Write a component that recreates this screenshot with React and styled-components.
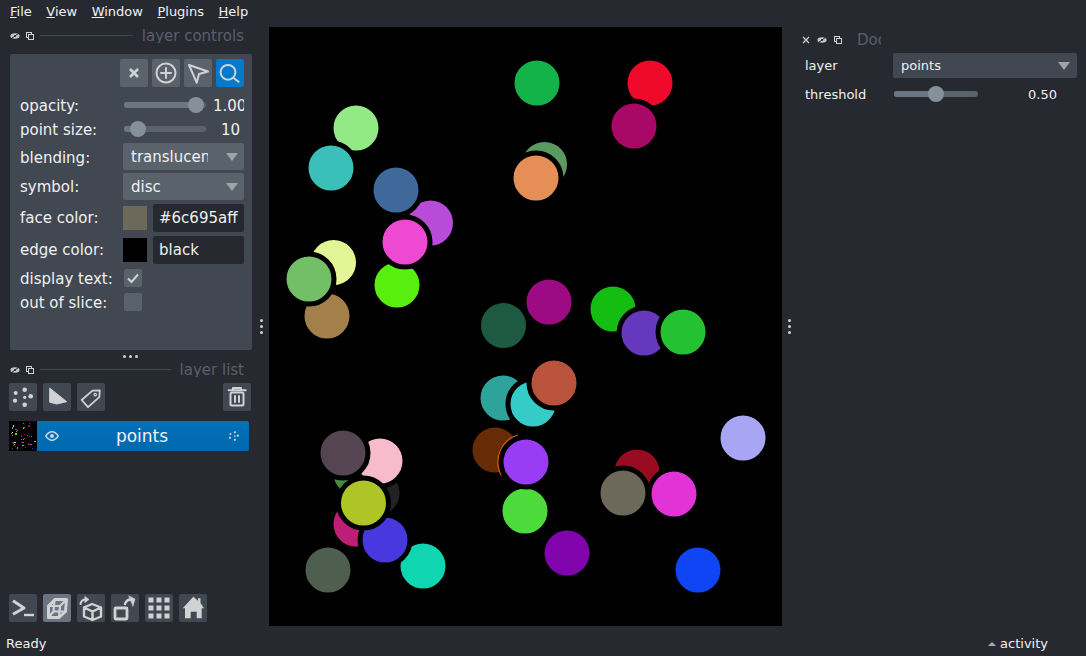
import React from "react";
import styled, { createGlobalStyle } from "styled-components";

const GlobalStyle = createGlobalStyle`
  html, body {
    margin: 0;
    padding: 0;
    background: #262930;
  }
  body {
    font-family: "DejaVu Sans", sans-serif;
    color: #f0f1f2;
  }
`;

const Page = styled.div`
  width: 1086px;
  height: 656px;
  display: flex;
  flex-direction: column;
  background: #262930;
  overflow: hidden;
`;

const MenuBar = styled.div`
  height: 27px;
  flex: none;
  display: flex;
  align-items: flex-start;
  gap: 14.5px;
  padding: 4px 0 0 10px;
  box-sizing: border-box;
  font-size: 13px;
  line-height: 16px;
`;

const Middle = styled.div`
  height: 599px;
  flex: none;
  display: flex;
`;

const LeftDock = styled.div`
  width: 253px;
  flex: none;
  display: flex;
  flex-direction: column;
`;

const TitleBar = styled.div`
  height: 17px;
  flex: none;
  display: flex;
  align-items: center;
  padding: 0 9px 0 10px;
`;

const TinyIcons = styled.div`
  display: flex;
  align-items: center;
  gap: ${(p) => p.$gap || 6}px;
  margin-right: ${(p) => p.$after || 6}px;
`;

const Rule = styled.div`
  flex: 1;
  height: 1px;
  background: #414851;
  margin-right: 9px;
`;

const TitleText = styled.div`
  font-size: 15px;
  line-height: 15px;
  height: 14px;
  overflow: hidden;
  color: #5a5f69;
  white-space: nowrap;
  ${(p) => p.$width && `width: ${p.$width}px;`}
`;

const ControlsPanel = styled.div`
  width: 242px;
  height: 296px;
  margin: 10px 0 0 10px;
  padding: 5px 8px 0 10px;
  box-sizing: border-box;
  background: #414851;
  border-radius: 2px;
  flex: none;
`;

const ModeRow = styled.div`
  display: flex;
  justify-content: flex-end;
  gap: 4px;
  margin-bottom: 6px;
`;

const IconButton = styled.div`
  width: 28px;
  height: 28px;
  flex: none;
  border-radius: 2px;
  background: ${(p) => (p.$active ? "#007acc" : p.$lit ? "#6a7380" : p.$dark ? "#414851" : "#5a626c")};
  svg { display: block; }
`;

const Row = styled.div`
  display: grid;
  grid-template-columns: 103px 121px;
  align-items: center;
  height: ${(p) => p.$h || 24}px;
  margin-top: ${(p) => p.$mt || 0}px;
  font-size: 15px;
`;

const Label = styled.span`
  padding-top: ${(p) => (p.$flat ? 0 : 2)}px;
`;

const Control = styled.div`
  display: flex;
  align-items: center;
  min-width: 0;
`;

const Track = styled.div`
  position: relative;
  width: ${(p) => p.$w}px;
  height: 6px;
  flex: none;
  margin-left: 1px;
  border-radius: 3px;
  background: #5a626c;
`;

const TrackFill = styled.div`
  height: 100%;
  border-radius: 3px;
  background: #6a7682;
`;

const Knob = styled.div`
  position: absolute;
  top: -5px;
  width: 16px;
  height: 16px;
  margin-left: -8px;
  border-radius: 50%;
  background: #86909b;
`;

const SliderValue = styled.div`
  flex: 1;
  min-width: 0;
  overflow: hidden;
  white-space: nowrap;
  text-align: ${(p) => (p.$clip ? "left" : "right")};
  padding-top: 2px;
  padding-left: ${(p) => (p.$clip ? 7 : 0)}px;
  padding-right: ${(p) => (p.$clip ? 0 : 4)}px;
  font-size: 15px;
`;

const Combo = styled.div`
  display: flex;
  align-items: center;
  justify-content: space-between;
  width: ${(p) => p.$w}px;
  height: ${(p) => p.$h}px;
  box-sizing: border-box;
  padding: 0 ${(p) => p.$pr}px 0 8px;
  border-radius: 2px;
  background: ${(p) => p.$bg};
  font-size: ${(p) => p.$fs}px;
`;

const ComboText = styled.div`
  width: ${(p) => (p.$clip ? `${p.$clip}px` : "auto")};
  overflow: hidden;
  white-space: nowrap;
`;

const Caret = styled.div`
  width: 0;
  height: 0;
  border-left: 6.5px solid transparent;
  border-right: 6.5px solid transparent;
  border-top: 8px solid #9fa4ab;
`;

const Swatch = styled.div`
  width: 24px;
  height: 24px;
  flex: none;
  background: ${(p) => p.$color};
  margin-right: 6px;
`;

const ColorInput = styled.div`
  width: 91px;
  height: 28px;
  box-sizing: border-box;
  padding-left: 6px;
  line-height: 28px;
  border-radius: 2px;
  background: #262930;
  font-size: 15px;
  white-space: nowrap;
`;

const Check = styled.div`
  width: 18px;
  height: 18px;
  margin-left: 1px;
  border-radius: 2px;
  background: #5a626c;
  svg { display: block; }
`;

const HDots = styled.div`
  height: 9px;
  flex: none;
  display: flex;
  justify-content: center;
  align-items: center;
  gap: 3px;
  padding: 0 0 0 7px;
  margin-top: 2px;
`;

const VDots = styled.div`
  width: ${(p) => p.$w}px;
  flex: none;
  display: flex;
  flex-direction: column;
  justify-content: center;
  align-items: center;
  gap: 3px;
`;

const Dot = styled.span`
  width: 3px;
  height: 3px;
  border-radius: 50%;
  background: #d1d2d4;
`;

const LayerButtons = styled.div`
  display: flex;
  gap: 6px;
  margin: 5px 2px 0 9px;
`;

const Grow = styled.div`
  flex: 1;
`;

const LayerItem = styled.div`
  display: flex;
  align-items: center;
  height: 30px;
  margin: 10px 4px 0 9px;
  flex: none;
`;

const Thumb = styled.svg`
  width: 28px;
  height: 30px;
  flex: none;
  display: block;
  background: #000;
`;

const LayerBar = styled.div`
  flex: 1;
  height: 30px;
  display: flex;
  align-items: center;
  padding: 0 8px;
  box-sizing: border-box;
  border-radius: 0 2px 2px 0;
  background: linear-gradient(#0071bb, #0068ad);
`;

const LayerName = styled.div`
  flex: 1;
  text-align: center;
  font-size: 17px;
  padding-right: 2px;
`;

const BottomButtons = styled.div`
  display: flex;
  gap: 6px;
  margin: 0 0 4px 9px;
`;

const Canvas = styled.svg`
  width: 513px;
  height: 599px;
  flex: none;
  display: block;
  background: #000;
`;

const RightDock = styled.div`
  flex: 1;
  min-width: 0;
  display: flex;
  flex-direction: column;
  padding-left: 9px;
  font-size: 13px;
`;

const RightTitle = styled.div`
  height: 26px;
  display: flex;
  align-items: center;
  margin-left: -3px;
`;

const RightRow = styled.div`
  display: grid;
  grid-template-columns: 88px 184px;
  align-items: center;
  height: ${(p) => p.$h}px;
`;

const RightSlider = styled.div`
  display: flex;
  align-items: center;
`;

const RightValue = styled.div`
  width: 80px;
  margin-left: 30px;
  text-align: center;
  font-size: 13px;
`;

const StatusBar = styled.div`
  flex: 1;
  display: flex;
  justify-content: space-between;
  align-items: center;
  padding: 4px 38px 0 6px;
  box-sizing: border-box;
  font-size: 13px;
`;

const Activity = styled.div`
  display: flex;
  align-items: center;
  gap: 4px;
  margin-top: 1px;
`;

const ActivityCaret = styled.div`
  width: 0;
  height: 0;
  border-left: 4px solid transparent;
  border-right: 4px solid transparent;
  border-bottom: 4px solid #a8acb2;
`;

const ICON = "#d1d2d4";

const Glyph = ({ children, size = 28 }) => (
  <svg width={size} height={size} viewBox="0 0 28 28" fill="none" stroke={ICON} strokeWidth="2" strokeLinejoin="round" strokeLinecap="round">
    {children}
  </svg>
);

const HideIcon = () => (
  <svg width="10" height="8" viewBox="0 0 10 8">
    <ellipse cx="5" cy="4" rx="4.6" ry="2.8" fill="#c4c6c9" />
    <path d="M1.5 6.5 8.5 1.5" stroke="#262930" strokeWidth="1" />
    <circle cx="5" cy="4" r="1" fill="#262930" />
  </svg>
);

const FloatIcon = () => (
  <svg width="8" height="8" viewBox="0 0 8 8" fill="none" stroke="#d1d2d4">
    <rect x="0.5" y="0.5" width="5" height="5" />
    <rect x="2.5" y="2.5" width="5" height="5" fill="#262930" />
  </svg>
);

const CloseTiny = () => (
  <svg width="8" height="8" viewBox="0 0 8 8" stroke="#d1d2d4" strokeWidth="1.3">
    <path d="M1 1 7 7M7 1 1 7" />
  </svg>
);

const PointsDots = ({ fill = ICON }) => (
  <g fill={fill} stroke="none">
    <circle cx="15.7" cy="6.7" r="2.3" />
    <circle cx="6.7" cy="9.9" r="2" />
    <circle cx="21.7" cy="13.3" r="2.3" />
    <circle cx="6" cy="17.7" r="2.1" />
    <circle cx="15.7" cy="14.3" r="1.6" />
    <circle cx="15.7" cy="21.7" r="2.3" />
  </g>
);

const POINTS = [
  [537, 83, "#14b34a"],
  [650, 83, "#ef0a2b"],
  [634, 126, "#a80866"],
  [356, 128, "#93e985"],
  [331, 168, "#3abfb9"],
  [430.5, 223, "#b84bd8"],
  [396, 190, "#3f689b"],
  [397, 285, "#58ee0e"],
  [405, 242, "#ee49d3"],
  [544.5, 164.5, "#5a9a60"],
  [536, 178, "#e58e55"],
  [333.5, 262.5, "#e3f595"],
  [327, 316, "#a37f4a"],
  [309, 279, "#72bf68"],
  [503.5, 325.5, "#1e5a43"],
  [549, 302, "#9c0b84"],
  [613, 309, "#15bc12"],
  [644, 333, "#6538bd"],
  [683, 332, "#24c233"],
  [743, 438, "#a9a5f5"],
  [503, 398, "#2ea39b"],
  [533, 404, "#35cbc6"],
  [554, 383, "#b9533c"],
  [495, 450, "#652c06"],
  [525, 511, "#4cdb3a"],
  [526, 462, "#993df5"],
  [637, 472, "#990b20"],
  [623, 493, "#6c695a"],
  [674, 494, "#e233d7"],
  [356, 524, "#bf1e76"],
  [356, 473, "#4a8a44"],
  [377, 493, "#222222"],
  [380, 461, "#f6bccb"],
  [343, 453, "#554451"],
  [423, 566, "#0fd6b0"],
  [385, 540, "#4838e0"],
  [363.5, 503, "#adc526"],
  [328, 570, "#4e5f4f"],
  [567, 553, "#8003ab"],
  [698, 570, "#0f45f5"],
];

const Slider = ({ width, at, fill }) => (
  <Track $w={width}>
    <TrackFill style={{ width: `${fill}px` }} />
    <Knob style={{ left: `${at}px` }} />
  </Track>
);

const ComboBox = ({ text, clip, w = 121, h = 27, pr = 6, bg = "#5a626c", fs = 15 }) => (
  <Combo $w={w} $h={h} $pr={pr} $bg={bg} $fs={fs}>
    <ComboText $clip={clip}>{text}</ComboText>
    <Caret />
  </Combo>
);

const Dots = ({ as: Wrap, ...rest }) => (
  <Wrap {...rest}>
    <Dot />
    <Dot />
    <Dot />
  </Wrap>
);

export default function App() {
  return (
    <Page>
      <GlobalStyle />
      <MenuBar>
        <span><u>F</u>ile</span>
        <span><u>V</u>iew</span>
        <span><u>W</u>indow</span>
        <span><u>P</u>lugins</span>
        <span><u>H</u>elp</span>
      </MenuBar>
      <Middle>
        <LeftDock>
          <TitleBar>
            <TinyIcons><HideIcon /><FloatIcon /></TinyIcons>
            <Rule />
            <TitleText>layer controls</TitleText>
          </TitleBar>
          <ControlsPanel>
            <ModeRow>
              <IconButton>
                <Glyph><path d="M10 10 18 18M18 10 10 18" strokeWidth="2.6" strokeLinecap="butt" /></Glyph>
              </IconButton>
              <IconButton>
                <Glyph><circle cx="14" cy="14" r="9.5" /><path d="M14 9v10M9 14h10" /></Glyph>
              </IconButton>
              <IconButton>
                <Glyph><path d="M5 6 24 12.5 15 15 12.7 23.7Z" /></Glyph>
              </IconButton>
              <IconButton $active>
                <Glyph><circle cx="12" cy="13.3" r="7.4" /><path d="M17.6 19 23.3 23.3" strokeLinecap="butt" /></Glyph>
              </IconButton>
            </ModeRow>
            <Row>
              <Label>opacity:</Label>
              <Control>
                <Slider width={82} at={72} fill={72} />
                <SliderValue $clip>1.00</SliderValue>
              </Control>
            </Row>
            <Row>
              <Label>point size:</Label>
              <Control>
                <Slider width={82} at={14} fill={14} />
                <SliderValue>10</SliderValue>
              </Control>
            </Row>
            <Row $h={27} $mt={2}>
              <Label>blending:</Label>
              <ComboBox text="translucent" clip={77} />
            </Row>
            <Row $h={27} $mt={3}>
              <Label $flat>symbol:</Label>
              <ComboBox text="disc" />
            </Row>
            <Row $h={28} $mt={4}>
              <Label $flat>face color:</Label>
              <Control>
                <Swatch $color="#6c695a" />
                <ColorInput>#6c695aff</ColorInput>
              </Control>
            </Row>
            <Row $h={28} $mt={4}>
              <Label $flat>edge color:</Label>
              <Control>
                <Swatch $color="#000" />
                <ColorInput>black</ColorInput>
              </Control>
            </Row>
            <Row $mt={2}>
              <Label>display text:</Label>
              <Control>
                <Check>
                  <svg width="18" height="18" viewBox="0 0 18 18" fill="none" stroke="#d1d2d4" strokeWidth="2">
                    <path d="M4 9.5 7.5 13 14 5.5" />
                  </svg>
                </Check>
              </Control>
            </Row>
            <Row>
              <Label>out of slice:</Label>
              <Control><Check /></Control>
            </Row>
          </ControlsPanel>
          <Dots as={HDots} />
          <TitleBar>
            <TinyIcons><HideIcon /><FloatIcon /></TinyIcons>
            <Rule />
            <TitleText>layer list</TitleText>
          </TitleBar>
          <LayerButtons>
            <IconButton $dark><Glyph><PointsDots /></Glyph></IconButton>
            <IconButton $dark>
              <Glyph><path d="M7 5.3 23.7 18.7 13.7 21 7 19.3Z" fill={ICON} strokeWidth="1" /></Glyph>
            </IconButton>
            <IconButton $dark>
              <Glyph>
                <path d="M4.7 17 15.5 7.6 22.8 7.4 22.3 14.2 11 24.2Z" strokeWidth="1.8" />
                <circle cx="18.2" cy="11.6" r="1.3" strokeWidth="1.2" />
              </Glyph>
            </IconButton>
            <Grow />
            <IconButton $dark>
              <Glyph>
                <path d="M5.7 7.2h17M10 7V5h8v2" />
                <rect x="7.5" y="9.6" width="13" height="12.8" rx="1.5" />
                <path d="M12 13v6M16 13v6" />
              </Glyph>
            </IconButton>
          </LayerButtons>
          <LayerItem>
            <Thumb viewBox="269 27 513 599" preserveAspectRatio="none" shapeRendering="crispEdges">
              {POINTS.map(([x, y, c]) => (
                <rect key={`${x}-${y}`} x={x - 12} y={y - 12} width="24" height="24" fill={c} />
              ))}
            </Thumb>
            <LayerBar>
              <svg width="14" height="10" viewBox="0 0 14 10" fill="none" stroke="#c9d6e2" strokeWidth="1.4">
                <path d="M0.7 5C3 1.8 5 0.8 7 0.8S11 1.8 13.3 5C11 8.2 9 9.2 7 9.2S3 8.2 0.7 5Z" />
                <circle cx="7" cy="5" r="2" fill="#c9d6e2" stroke="none" />
              </svg>
              <LayerName>points</LayerName>
              <svg width="14" height="14" viewBox="0 0 28 28"><PointsDots fill="#c9d6e2" /></svg>
            </LayerBar>
          </LayerItem>
          <Grow />
          <BottomButtons>
            <IconButton $dark>
              <Glyph><path d="M4 6.7 15 14 4 20.3" strokeWidth="3" strokeLinecap="butt" /><path d="M15 21h10" strokeWidth="2.4" strokeLinecap="butt" /></Glyph>
            </IconButton>
            <IconButton $lit>
              <Glyph>
                <path d="M5.5 12 12 5.5H23.5L22.5 17.5 16 23.5H5.5Z" strokeWidth="3" />
                <path d="M6.5 12H17L16 23M17 12 23 6M11.5 6 10.5 17.5H22M10.5 17.5 6 23" strokeWidth="2.2" />
              </Glyph>
            </IconButton>
            <IconButton $dark>
              <Glyph>
                <path d="M15 10 24 13.5V22.5L15.5 26 7 22.5V13.5ZM7 13.5 15.5 17.5 24 13.5M15.5 17.5V26" strokeWidth="2.4" />
                <path d="M3.5 10C4 7 6 5.5 9 5.5" />
                <path d="M8 2.5 12 5.5 8 8.5Z" fill={ICON} strokeWidth="0.6" />
              </Glyph>
            </IconButton>
            <IconButton $dark>
              <Glyph>
                <rect x="4" y="14" width="12" height="11" rx="1" strokeWidth="2.8" />
                <path d="M14 10C15 7 17 5.5 20 5.5" strokeWidth="2.4" />
                <path d="M18 2 24 5 22 12Z" fill={ICON} strokeWidth="0.6" />
              </Glyph>
            </IconButton>
            <IconButton $dark>
              <svg width="28" height="28" viewBox="0 0 28 28" fill={ICON}>
                {[3.5, 11.5, 19.5].flatMap((y) =>
                  [3.5, 11.5, 19.5].map((x) => <rect key={`${x}-${y}`} x={x} y={y} width="5" height="5" />)
                )}
              </svg>
            </IconButton>
            <IconButton $dark>
              <svg width="28" height="28" viewBox="0 0 28 28" fill={ICON}>
                <path d="M14.3 2.7 19 6.8V4.3h2.5V9L25 14.3H22.7V24.3H17.7V17.7H11.7V24.3H6V14.3H3.7Z" />
              </svg>
            </IconButton>
          </BottomButtons>
        </LeftDock>
        <Dots as={VDots} $w={16} />
        <Canvas viewBox="269 27 513 599">
          {POINTS.map(([x, y, c]) => (
            <React.Fragment key={`${x}-${y}`}>
              {c === "#993df5" && (
                <path d="M518 435 A28.2 28.2 0 0 0 501.5 475.5" fill="none" stroke="#e85a12" strokeWidth="1.2" />
              )}
              <circle cx={x} cy={y} r="25" fill={c} stroke="#000" strokeWidth="5" />
            </React.Fragment>
          ))}
        </Canvas>
        <Dots as={VDots} $w={14} />
        <RightDock>
          <RightTitle>
            <TinyIcons $gap={7} $after={15}><CloseTiny /><HideIcon /><FloatIcon /></TinyIcons>
            <TitleText $width={24}>Dock</TitleText>
          </RightTitle>
          <RightRow $h={25}>
            <span>layer</span>
            <ComboBox text="points" w={184} h={25} pr={7} bg="#414851" fs={13} />
          </RightRow>
          <RightRow $h={32}>
            <span>threshold</span>
            <RightSlider>
              <Slider width={84} at={42} fill={42} />
              <RightValue>0.50</RightValue>
            </RightSlider>
          </RightRow>
        </RightDock>
      </Middle>
      <StatusBar>
        <span>Ready</span>
        <Activity><ActivityCaret /><span>activity</span></Activity>
      </StatusBar>
    </Page>
  );
}
